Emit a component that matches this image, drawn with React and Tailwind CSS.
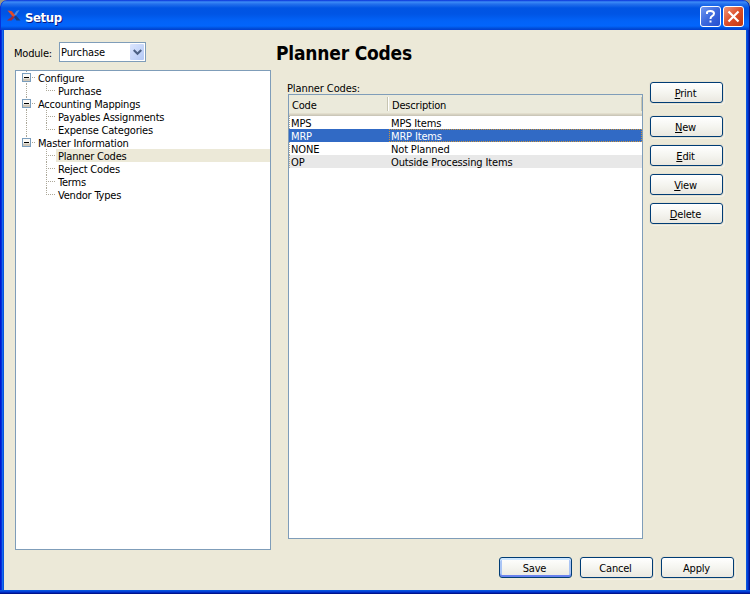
import React from "react";

const FONT = "font-['DejaVu_Sans_Condensed','DejaVu_Sans',sans-serif] [font-stretch:condensed]";

const tree = [
  { label: "Configure", root: true },
  { label: "Purchase", last: true, trunk: true },
  { label: "Accounting Mappings", root: true },
  { label: "Payables Assignments", trunk: true },
  { label: "Expense Categories", last: true, trunk: true },
  { label: "Master Information", root: true, end: true },
  { label: "Planner Codes", selected: true },
  { label: "Reject Codes" },
  { label: "Terms" },
  { label: "Vendor Types", last: true },
];

const rows = [
  { code: "MPS", text: "MPS Items" },
  { code: "MRP", text: "MRP Items", selected: true },
  { code: "NONE", text: "Not Planned" },
  { code: "OP", text: "Outside Processing Items", alt: true },
];

function Connector({ row }) {
  const line = { stroke: "#aca899", strokeDasharray: "1 1", strokeWidth: 1 };
  return (
    <svg className="shrink-0" width={row.root ? 20 : 40} height="13" shapeRendering="crispEdges">
      {row.root ? (
        <>
          <path d="M10.5 0V2" {...line} />
          {!row.end && <path d="M10.5 12V13" {...line} />}
          <path d="M16 6.5H20" {...line} />
          <rect x="6" y="2" width="9" height="9" fill="#7b9ebd" />
          <rect x="7" y="3" width="7" height="7" fill="#fbfaf7" />
          <rect x="7" y="7" width="7" height="1" fill="#e6e2d9" />
          <rect x="7" y="8" width="7" height="2" fill="#cdc6b9" />
          <rect x="8" y="6" width="5" height="1" fill="#000" />
        </>
      ) : (
        <>
          {row.trunk && <path d="M10.5 0V13" {...line} />}
          <path d={row.last ? "M30.5 0V6" : "M30.5 0V13"} {...line} />
          <path d="M30 6.5H40" {...line} />
        </>
      )}
    </svg>
  );
}

function Button({ label, hot, focus, className = "" }) {
  return (
    <button
      className={`flex h-[21px] w-[73px] shrink-0 items-center justify-center rounded-[3px] border border-[#003c74] bg-linear-to-b from-white via-[#f5f5f0] to-[#eae8e0] pt-[2px] pr-[2px] text-[11px] leading-[13px] ${
        focus
          ? "shadow-[inset_0_2px_0_#cee7ff,inset_0_-2px_0_#6982ee,inset_2px_0_0_#a9c4f5,inset_-2px_0_0_#a9c4f5]"
          : "shadow-[0_0_0_1px_#e4e1d2,1px_1px_0_1px_#f3f1e7]"
      } ${className}`}
    >
      <span className="tracking-[-0.2px]">
        {hot ? <span className="underline decoration-1 underline-offset-1">{label[0]}</span> : label[0]}
        {label.slice(1)}
      </span>
    </button>
  );
}

function TitleBar() {
  return (
    <header className="flex h-[30px] shrink-0 items-center rounded-t-[7px] bg-[linear-gradient(180deg,#0831d9_0,#3c8cf7_2px,#2470ec_4px,#0054e3_8px,#0055e5_14px,#0263f8_21px,#0265fc_26px,#0048d0_29px,#003dd7_30px)] pr-[6px] pl-[7px] shadow-[inset_1px_0_0_#0831d9,inset_-1px_0_0_#001ea0]">
      <svg width="14" height="14" viewBox="0 0 14 14" className="mt-[1px] shrink-0">
        <path d="M.5 1.500 4.500 2 8.500 6.500 6 8Z" fill="#e34b26" />
        <path d="M5.500 7 7.500 8.500 4.500 11.500H0Z" fill="#a02a3a" />
        <path d="M12.500 1 9 6.500 7 5.500 9.500 2Z" fill="#4f8de0" />
        <path d="M7 8 9 6.500 13.500 11.500H9.500Z" fill="#173f87" />
      </svg>
      <h1 className="mt-[5px] ml-[4px] flex-1 text-[13px] leading-[16px] font-bold tracking-[-0.4px] text-white [text-shadow:1px_1px_0_#0a1883]">Setup</h1>
      <div className="mt-[3px] flex gap-[2px]">
        <span className="flex size-[21px] items-center justify-center rounded-[3px] border border-white bg-linear-to-br from-[#7197ef] via-[#3c68dd] to-[#244fd0]">
          <svg width="19" height="19" viewBox="0 0 19 19" fill="none" stroke="#fff" strokeWidth="2">
            <path d="M6 7V5.500Q6 4 9.500 4T13 6.500Q13 8 11 9.200 9.500 10 9.500 12" />
            <path d="M9.500 13.500V15.500" />
          </svg>
        </span>
        <span className="flex size-[21px] items-center justify-center rounded-[3px] border border-white bg-linear-to-br from-[#ee9478] via-[#dc4d28] to-[#c13710]">
          <svg width="19" height="19" viewBox="0 0 19 19" fill="none" stroke="#fff" strokeWidth="2.200">
            <path d="M4.500 4.500 14.500 14.500M14.500 4.500 4.500 14.500" />
          </svg>
        </span>
      </div>
    </header>
  );
}

export default function App() {
  return (
    <div className="h-[594px] w-[750px] overflow-hidden bg-[#9a9684]">
      <div className={`flex h-full flex-col overflow-hidden rounded-t-[7px] text-[11px] leading-[13px] text-black ${FONT}`}>
        <TitleBar />
        <div className="flex min-h-0 flex-1">
          <div className="w-[4px] shrink-0 bg-[linear-gradient(90deg,#0019cf_1px,#0831d9_1px,#0831d9_2px,#166aee_2px,#166aee_3px,#0855dd_3px)]" />
          <div className="flex flex-1 bg-[#ece9d8]">
            <section className="ml-[11px] flex w-[256px] shrink-0 flex-col">
              <div className="mt-[12px] flex h-[20px] items-center">
                <span className="-ml-px w-[45px] pt-[2px] tracking-[-0.2px] whitespace-nowrap">Module:</span>
                <div className="flex h-[20px] w-[87px] items-center border border-[#7f9db9] bg-white pr-px pl-px">
                  <span className="flex-1 tracking-[-0.1px]">Purchase</span>
                  <span className="flex h-[16px] w-[14px] items-center justify-center rounded-[1px] bg-linear-to-br from-[#dce6fe] to-[#b3c8f5]">
                    <svg width="9" height="7" viewBox="0 0 9 7" fill="none" stroke="#4d6185" strokeWidth="2.200">
                      <path d="M.7 1 4.500 4.800 8.300 1" />
                    </svg>
                  </span>
                </div>
              </div>
              <div className="mt-[8px] h-[480px] border border-[#7f9db9] bg-white">
                {tree.map((row) => (
                  <div key={row.label} className="flex h-[13px]">
                    <Connector row={row} />
                    <span className={`flex-1 pt-px pl-[2px] tracking-[-0.2px] whitespace-nowrap ${row.selected ? "bg-[#ece9d8]" : ""}`}>
                      {row.label}
                    </span>
                  </div>
                ))}
              </div>
            </section>

            <main className="flex flex-1 flex-col">
              <h2 className="mt-[11px] ml-[5px] h-[25px] text-[19px] leading-[25px] font-bold tracking-[-0.2px] whitespace-nowrap">Planner Codes</h2>
              <div className="flex">
                <div className="ml-[17px] w-[355px] shrink-0">
                  <div className="-ml-px mt-[15px] h-[13px] pt-px tracking-[-0.1px]">Planner Codes:</div>
                  <div className="h-[445px] border border-[#7f9db9] bg-white">
                    <div className="flex h-[21px] items-center bg-[linear-gradient(180deg,#ebeadb_0,#ebeadb_18px,#e2decd_18px,#e2decd_19px,#d6d2c2_19px,#d6d2c2_20px,#cbc7b8_20px)] pb-[3px] tracking-[-0.2px]">
                      <span className="h-[14px] w-[99px] border-r border-[#c7c5b2] pt-[2px] pl-[3px]">Code</span>
                      <span className="h-[14px] flex-1 border-r border-l border-r-[#c7c5b2] border-l-white pt-[2px] pl-[3px]">Description</span>
                    </div>
                    {rows.map((r) => (
                      <div
                        key={r.code}
                        className={`flex h-[13px] tracking-[-0.15px] ${
                          r.selected ? "bg-[#316ac5] text-white" : r.alt ? "bg-[#e8e8e8]" : ""
                        }`}
                      >
                        <span className={`w-[100px] border-l border-dotted pt-px pl-px ${r.selected ? "border-transparent" : "border-[#aca899]"}`}>{r.code}</span>
                        <span className={`h-[13px] flex-1 border pl-px whitespace-nowrap ${r.selected ? "border-dotted border-[#ce953a]" : "border-transparent"}`}>
                          {r.text}
                        </span>
                      </div>
                    ))}
                  </div>
                </div>
                <div className="mt-[16px] ml-[7px] flex flex-col gap-[8px]">
                  <Button label="Print" hot className="mb-[5px]" />
                  <Button label="New" hot />
                  <Button label="Edit" hot />
                  <Button label="View" hot />
                  <Button label="Delete" hot />
                </div>
              </div>
              <div className="mt-[18px] mr-[12px] flex justify-end gap-[8px]">
                <Button label="Save" focus />
                <Button label="Cancel" />
                <Button label="Apply" />
              </div>
            </main>
          </div>
          <div className="w-[4px] shrink-0 bg-[linear-gradient(90deg,#0855dd_1px,#0441d8_1px,#0441d8_2px,#0029bd_2px,#0029bd_3px,#00138c_3px)]" />
        </div>
        <div className="h-[4px] shrink-0 bg-[linear-gradient(180deg,#0855dd_1px,#0441d8_1px,#0441d8_2px,#0029bd_2px,#0029bd_3px,#00138c_3px)]" />
      </div>
    </div>
  );
}
